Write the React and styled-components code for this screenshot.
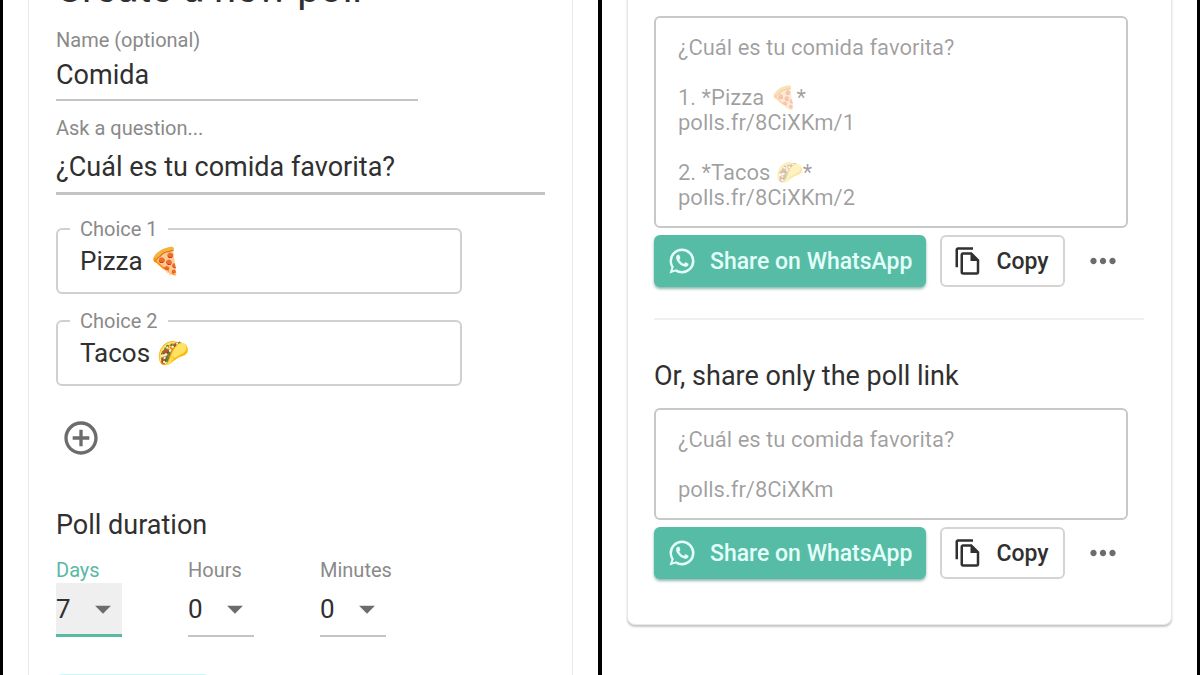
import React from "react";
import styled, { createGlobalStyle } from "styled-components";
import {
  MdAddCircleOutline,
  MdArrowDropDown,
  MdMoreHoriz,
} from "react-icons/md";

const GlobalStyle = createGlobalStyle`
  * {
    box-sizing: border-box;
  }
  body {
    margin: 0;
    background: #000;
    color: #303030;
    font-family: Roboto, "Liberation Sans", sans-serif;
  }
  button,
  input,
  select,
  textarea {
    font-family: inherit;
    color: inherit;
  }
`;

const App = () => {
  return (
    <Page>
      <GlobalStyle />
      <Screen>
        <CreatePoll />
      </Screen>
      <Screen>
        <SharePoll />
      </Screen>
    </Page>
  );
};

const CreatePoll = () => {
  return (
    <FormCard>
      <Title>Create a new poll</Title>
      <LineField $width="74%">
        <label htmlFor="name">Name (optional)</label>
        <input id="name" defaultValue="Comida" />
      </LineField>
      <LineField $width="100%" $large>
        <label htmlFor="question">Ask a question...</label>
        <input id="question" defaultValue="¿Cuál es tu comida favorita?" />
      </LineField>
      <Choices>
        <Choice>
          <legend>
            <label htmlFor="choice-1">Choice 1</label>
          </legend>
          <input id="choice-1" defaultValue="Pizza 🍕" />
        </Choice>
        <Choice>
          <legend>
            <label htmlFor="choice-2">Choice 2</label>
          </legend>
          <input id="choice-2" defaultValue="Tacos 🌮" />
        </Choice>
      </Choices>
      <AddButton aria-label="Add choice">
        <MdAddCircleOutline />
      </AddButton>
      <SubTitle>Poll duration</SubTitle>
      <Duration>
        <DurationField id="days" label="Days" value="7" active />
        <DurationField id="hours" label="Hours" value="0" />
        <DurationField id="minutes" label="Minutes" value="0" />
      </Duration>
      <Submit aria-label="Create poll" />
    </FormCard>
  );
};

const DurationField = ({ id, label, value, active }) => {
  return (
    <Unit $active={active}>
      <label htmlFor={id}>{label}</label>
      <div>
        <select id={id} defaultValue={value}>
          <option>{value}</option>
        </select>
        <MdArrowDropDown />
      </div>
    </Unit>
  );
};

const question = "¿Cuál es tu comida favorita?";
const fullText = `${question}

1. *Pizza 🍕*
polls.fr/8CiXKm/1

2. *Tacos 🌮*
polls.fr/8CiXKm/2`;
const linkText = `${question}

polls.fr/8CiXKm`;

const SharePoll = () => {
  return (
    <ShareCard>
      <ShareBlock>
        <SubTitle id="share-poll">Share the poll with your group</SubTitle>
        <Message aria-labelledby="share-poll" rows="7" disabled value={fullText} />
        <Actions />
      </ShareBlock>
      <Divider />
      <ShareBlock>
        <SubTitle id="share-link">Or, share only the poll link</SubTitle>
        <Message aria-labelledby="share-link" rows="3" disabled value={linkText} />
        <Actions />
      </ShareBlock>
    </ShareCard>
  );
};

const Actions = () => {
  return (
    <ActionRow>
      <WhatsAppButton>
        <WhatsAppIcon />
        Share on WhatsApp
      </WhatsAppButton>
      <CopyButton>
        <CopyIcon />
        Copy
      </CopyButton>
      <MoreButton aria-label="More options">
        <MdMoreHoriz />
      </MoreButton>
    </ActionRow>
  );
};

const WhatsAppIcon = () => (
  <svg viewBox="0 0 24 24" fill="currentColor">
    <path d="M16.75 13.96c.25.13.41.2.46.3.06.11.04.61-.21 1.18-.2.56-1.24 1.1-1.7 1.12-.46.02-.47.36-2.96-.73-2.49-1.09-3.99-3.75-4.11-3.92-.12-.17-.96-1.38-.92-2.61.05-1.22.69-1.8.95-2.04.24-.26.51-.29.68-.26h.47c.15 0 .36-.06.55.45l.69 1.87c.06.13.1.28.01.44l-.27.41-.39.42c-.12.12-.26.25-.12.5.12.26.62 1.09 1.32 1.78.91.88 1.71 1.17 1.95 1.3.24.14.39.12.54-.04l.81-.94c.19-.25.35-.19.58-.11l1.67.88M12 2a10 10 0 0 1 10 10 10 10 0 0 1-10 10c-1.97 0-3.8-.57-5.35-1.55L2 22l1.55-4.65A9.969 9.969 0 0 1 2 12 10 10 0 0 1 12 2m0 2a8 8 0 0 0-8 8c0 1.72.54 3.31 1.46 4.61L4.5 19.5l2.89-.96A7.95 7.95 0 0 0 12 20a8 8 0 0 0 8-8 8 8 0 0 0-8-8z" />
  </svg>
);

const CopyIcon = () => (
  <svg viewBox="0 0 24 24" fill="currentColor">
    <path d="M16 1H4c-1.1 0-2 .9-2 2v14h2V3h12V1zm-1 4H8c-1.1 0-1.99.9-1.99 2L6 21c0 1.1.89 2 1.99 2H19c1.1 0 2-.9 2-2V11l-6-6zM8 21V7h6v5h5v9H8z" />
  </svg>
);

const Page = styled.main`
  display: grid;
  grid-template-columns: 1fr 1fr;
  gap: 4px;
  height: 100vh;
  padding: 0 3px;
  overflow: hidden;
`;

const Screen = styled.section`
  min-height: 0;
  padding: 0 25px;
  background: #fff;
  overflow: hidden;
`;

const Card = styled.div`
  border: 1px solid #e8e8e8;
  border-radius: 8px;
  background: #fff;
`;

const FormCard = styled(Card)`
  margin-top: -40px;
  padding: 0 27px;
`;

const ShareCard = styled(Card)`
  margin-top: -33px;
  padding: 0 27px 45px 26px;
  box-shadow: 0 2px 2px #c8c8c8;
`;

const Title = styled.h1`
  margin: 0;
  font-size: 40px;
  font-weight: 400;
  line-height: 55px;
`;

const SubTitle = styled.h2`
  margin: 0;
  font-size: 27px;
  font-weight: 400;
  line-height: 32px;
`;

const LineField = styled.div`
  display: flex;
  flex-direction: column;
  width: ${(props) => props.$width};
  margin-top: ${(props) => (props.$large ? "15px" : "12px")};
  label {
    color: #8a8a8a;
    font-size: 20px;
    line-height: 24px;
  }
  input {
    height: ${(props) => (props.$large ? "55px" : "49px")};
    padding: ${(props) => (props.$large ? "2px 0 0" : "0 0 2px")};
    border: 0;
    border-bottom: ${(props) => (props.$large ? "3px" : "2px")} solid #c4c4c4;
    outline: 0;
    background: none;
    font-size: 27px;
  }
`;

const Choices = styled.div`
  display: flex;
  flex-direction: column;
  gap: 15px;
  width: 83%;
  margin-top: 22px;
`;

const Choice = styled.fieldset`
  min-width: 0;
  height: 77px;
  margin: 0;
  padding: 0 22px;
  border: 2px solid #d0d0d0;
  border-radius: 6px;
  legend {
    margin-left: -10px;
    padding: 0 10px;
    color: #8a8a8a;
    font-size: 20px;
    line-height: 24px;
  }
  input {
    width: 100%;
    height: 40px;
    padding: 0;
    border: 0;
    outline: 0;
    background: none;
    font-size: 26px;
  }
`;

const AddButton = styled.button`
  display: block;
  margin: 32px 0 51px 5px;
  padding: 0;
  border: 0;
  background: none;
  color: #6c6c6c;
  svg {
    display: block;
    width: 40px;
    height: 40px;
  }
`;

const Duration = styled.div`
  display: flex;
  gap: 66px;
  margin-top: 16px;
`;

const Unit = styled.div`
  width: 66px;
  label {
    display: block;
    color: ${(props) => (props.$active ? "#58b9a4" : "#8a8a8a")};
    font-size: 20px;
    line-height: 26px;
  }
  div {
    display: grid;
    align-items: center;
    height: 54px;
    border-bottom: ${(props) => (props.$active ? "3px solid #58b9a4" : "2px solid #c4c4c4")};
    background: ${(props) => (props.$active ? "#f0efef" : "none")};
  }
  select,
  svg {
    grid-area: 1 / 1;
  }
  select {
    appearance: none;
    width: 100%;
    padding: 0;
    border: 0;
    outline: 0;
    background: none;
    font-size: 26px;
  }
  svg {
    justify-self: end;
    width: 38px;
    height: 38px;
    color: #6c6c6c;
    pointer-events: none;
  }
`;

const Submit = styled.button`
  display: block;
  width: 154px;
  height: 50px;
  margin-top: 37px;
  border: 0;
  border-radius: 6px;
  background: #c9f9f6;
`;

const ShareBlock = styled.section`
  display: flex;
  flex-direction: column;
`;

const Message = styled.textarea`
  margin: 16px 16px 7px 0;
  padding: 17px 22px 16px;
  border: 2px solid #c8c8c8;
  border-radius: 6px;
  background: none;
  color: rgba(0, 0, 0, 0.38);
  font-size: 22px;
  line-height: 25px;
  resize: none;
  overflow: hidden;
`;

const ActionRow = styled.div`
  display: flex;
  align-items: center;
`;

const ActionButton = styled.button`
  display: flex;
  align-items: center;
  height: 52px;
  border-radius: 6px;
  font-size: 23px;
  font-weight: 500;
  white-space: nowrap;
  svg {
    width: 30px;
    height: 30px;
    margin-right: 13px;
  }
`;

const WhatsAppButton = styled(ActionButton)`
  padding: 0 14px 0 13px;
  border: 0;
  background: #56bca6;
  box-shadow: 0 2px 3px #8fb8ae;
  color: #e4fffa;
`;

const CopyButton = styled(ActionButton)`
  margin-left: 14px;
  padding: 0 14px 0 11px;
  border: 2px solid #d4d4d4;
  background: #fff;
`;

const MoreButton = styled.button`
  margin-left: 19px;
  padding: 0;
  border: 0;
  background: none;
  color: #6c6c6c;
  svg {
    display: block;
    width: 38px;
    height: 38px;
  }
`;

const Divider = styled.hr`
  width: 100%;
  margin: 31px 0 40px;
  border: 0;
  border-top: 2px solid #f0f0f0;
`;

export default App;
